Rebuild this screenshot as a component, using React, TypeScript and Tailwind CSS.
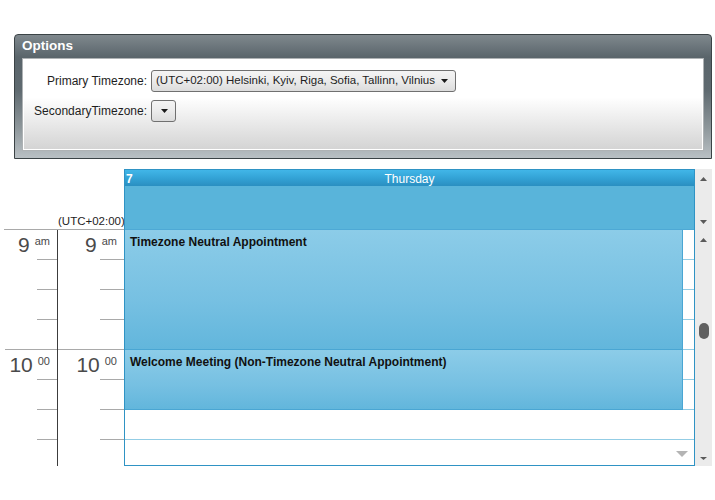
const hours = [
  { big: "9", small: "am" },
  { big: "10", small: "00" },
];

export default function App() {
  return (
    <div className="h-[500px] w-[715px] overflow-hidden bg-white font-['Liberation_Sans',Arial,sans-serif] text-[12px] text-[#1e1e1e]">
      <div className="pl-[14px] pr-[3px] pt-[34px]">
        <OptionsPanel />
      </div>

      <div className="mt-[10px] flex">
        <TimeColumn width="w-[58px]" tick="w-[20px]" divider showHeaderZone={false} />
        <TimeColumn width="w-[66px]" tick="w-[24px]" showHeaderZone />
        <DayColumn />
        <ScrollColumn />
      </div>
    </div>
  );
}

function OptionsPanel() {
  return (
    <div className="rounded-t-[4px] border border-[#3b4346] bg-[linear-gradient(180deg,#7f888d_0%,#5a656b_18%,#5f6a70_45%,#8d969a_75%,#b9c0c4_100%)] px-[7px] pb-[7px]">
      <div className="flex h-[23px] items-center text-[13.5px] font-bold text-white">Options</div>
      <div className="h-[93px] border border-[#aeb2b4] bg-[linear-gradient(180deg,#ffffff_0%,#ffffff_42%,#d3d3d3_100%)] shadow-[inset_0_0_0_1px_#ffffff]">
        <div className="grid grid-cols-[124px_auto] items-center gap-x-[4px] gap-y-[8px] pt-[11px]">
          <span className="text-right">Primary Timezone:</span>
          <ComboBox value="(UTC+02:00) Helsinki, Kyiv, Riga, Sofia, Tallinn, Vilnius" width="w-[305px]" />
          <span className="text-right">SecondaryTimezone:</span>
          <ComboBox value="" width="w-[25px]" />
        </div>
      </div>
    </div>
  );
}

function ComboBox({ value, width }: { value: string; width: string }) {
  return (
    <div
      className={`flex h-[22px] ${width} items-center justify-between rounded-[3px] border border-[#707070] bg-[linear-gradient(180deg,#f4f4f4_0%,#ebebeb_50%,#dcdcdc_100%)] pl-[4px] pr-[7px]`}
    >
      <span className="whitespace-nowrap text-[11.5px]">{value}</span>
      <Arrow dir="down" color="#1a1a1a" w={7} h={4} />
    </div>
  );
}

function Arrow({ dir, color, w, h }: { dir: "up" | "down"; color: string; w: number; h: number }) {
  const points = dir === "down" ? `0,0 ${w},0 ${w / 2},${h}` : `0,${h} ${w},${h} ${w / 2},0`;
  return (
    <svg width={w} height={h} viewBox={`0 0 ${w} ${h}`} className="shrink-0">
      <polygon points={points} fill={color} />
    </svg>
  );
}

type TimeColumnProps = {
  width: string;
  tick: string;
  divider?: boolean;
  showHeaderZone: boolean;
};

function TimeColumn({ width, tick, divider, showHeaderZone }: TimeColumnProps) {
  return (
    <div className={`${width} shrink-0`}>
      <div className={`flex h-[61px] items-end border-b border-[#a9a9a9] ${divider ? "ml-[4px]" : ""}`}>
        {showHeaderZone && (
          <span className="whitespace-nowrap pb-[1px] text-[11.5px] leading-[14px]">(UTC+02:00)</span>
        )}
      </div>
      <div className={`h-[236px] overflow-hidden ${divider ? "border-r border-[#3c3c3c]" : ""}`}>
        {hours.map((hour) => (
          <div key={hour.big}>
            {[0, 1, 2, 3].map((slot) => (
              <div key={slot} className="flex h-[30px] flex-col justify-between">
                <div className="flex justify-end pr-[7px] pt-[6px] text-[#4a4a4a]">
                  {slot === 0 && (
                    <>
                      <span className="text-[21px] leading-[18px]">{hour.big}</span>
                      <span className="ml-[5px] text-[11px] leading-[11px]">{hour.small}</span>
                    </>
                  )}
                </div>
                <div className={`h-px bg-[#a9a9a9] ${slot === 3 ? (divider ? "ml-[5px]" : "") : `ml-auto ${tick}`}`} />
              </div>
            ))}
          </div>
        ))}
      </div>
    </div>
  );
}

function DayColumn() {
  return (
    <div className="w-[571px] shrink-0">
      <div className="border-x border-t border-[#2f93c4]">
        <div className="flex h-[16px] items-center bg-[linear-gradient(180deg,#41b6e8_0%,#33a3d6_50%,#2a8fc1_100%)] pt-[2px] text-white">
          <span className="w-[120px] pl-[1px] font-bold">7</span>
          <span className="flex-1 pr-[120px] text-center">Thursday</span>
        </div>
        <div className="h-[44px] border-b border-[#4ea9d5] bg-[#59b4da]" />
      </div>
      <div className="relative h-[236px] overflow-hidden border-x border-b border-[#2f93c4]">
        {Array.from({ length: 8 }).map((_, i) => (
          <div key={i} className="h-[30px] border-b border-[#93cde5]" />
        ))}
        <div className="absolute left-0 right-[11px] top-0 flex flex-col">
          <Appointment title="Timezone Neutral Appointment" height="h-[120px]" />
          <Appointment title="Welcome Meeting (Non-Timezone Neutral Appointment)" height="h-[60px]" />
        </div>
        <div className="absolute bottom-[8px] right-[6px]">
          <Arrow dir="down" color="#b4b4b4" w={12} h={6} />
        </div>
      </div>
    </div>
  );
}

function Appointment({ title, height }: { title: string; height: string }) {
  return (
    <div
      className={`${height} border-b border-r border-[#4aa6d3] bg-[linear-gradient(180deg,#8ccce8_0%,#76c0e2_60%,#62b6dc_100%)] pl-[5px] pt-[3px] font-bold text-[#111]`}
    >
      {title}
    </div>
  );
}

function ScrollColumn() {
  return (
    <div className="w-[17px] shrink-0 bg-[#ebebeb]">
      <div className="flex h-[61px] flex-col items-center justify-between pb-[6px] pt-[8px]">
        <Arrow dir="up" color="#5a5a5a" w={7} h={4} />
        <Arrow dir="down" color="#5a5a5a" w={7} h={4} />
      </div>
      <div className="relative flex h-[236px] flex-col items-center justify-between pb-[6px] pt-[8px]">
        <Arrow dir="up" color="#5a5a5a" w={7} h={4} />
        <div className="absolute left-[4px] top-[93px] h-[16px] w-[10px] rounded-full bg-[#606060]" />
        <Arrow dir="down" color="#5a5a5a" w={7} h={3} />
      </div>
    </div>
  );
}
